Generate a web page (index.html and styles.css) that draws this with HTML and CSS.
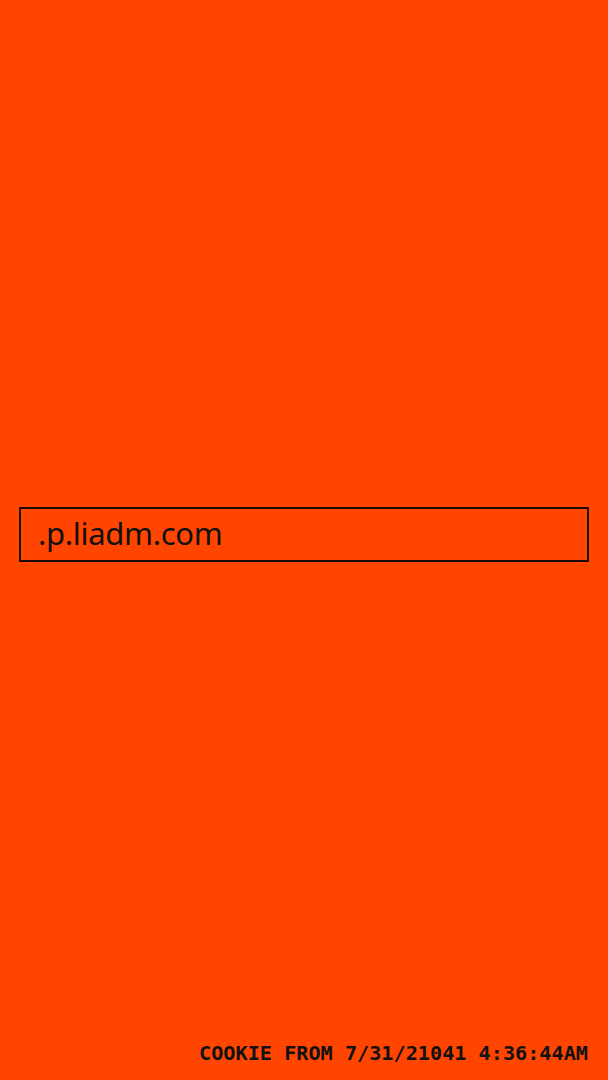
FILE: index.html
```html
<!DOCTYPE html>
<html>
<head>
<meta charset="utf-8">
<link rel="stylesheet" href="styles.css">
</head>
<body>
<div class="page">
  <main class="stage">
    <div class="domain-box"><span class="domain">.p.liadm.com</span></div>
  </main>
  <footer class="footer">COOKIE FROM 7/31/21041 4:36:44AM</footer>
</div>
</body>
</html>
```
FILE: styles.css
```css
html, body {
  margin: 0;
  padding: 0;
  background: #ff4500;
}
.page {
  width: 608px;
  height: 1080px;
  display: flex;
  flex-direction: column;
  box-sizing: border-box;
}
.stage {
  flex: 1;
  padding: 507px 19px 0 19px;
}
.domain-box {
  height: 55px;
  box-sizing: border-box;
  border: 2px solid #1a0a00;
  display: flex;
  align-items: center;
  padding-left: 17px;
  padding-bottom: 4px;
}
.domain {
  font-family: "Noto Sans", sans-serif;
  font-size: 31px;
  color: #111;
  letter-spacing: -0.3px;
}
.footer {
  font-family: "DejaVu Sans Mono", monospace;
  font-weight: bold;
  font-size: 20.2px;
  color: #111;
  text-align: right;
  padding: 0 20px 15px 0;
  line-height: 24px;
}
```
